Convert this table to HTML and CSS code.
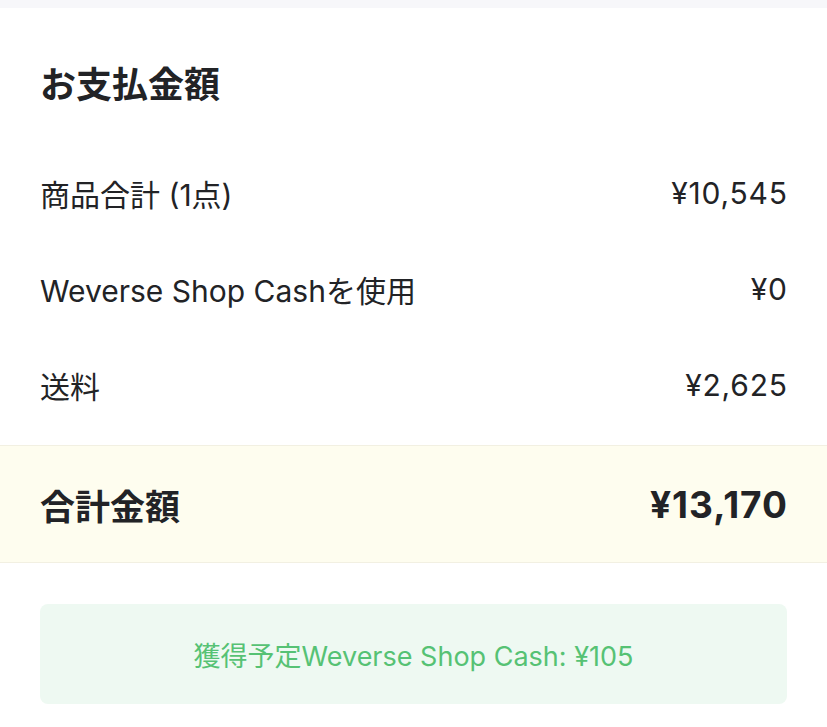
FILE: index.html
```html
<!DOCTYPE html>
<html lang="ja">
<head>
<meta charset="utf-8">
<link rel="stylesheet" href="styles.css">
</head>
<body>
<div class="strip"></div>
<section class="summary">
  <h2 class="title">お支払金額</h2>
  <div class="row"><span>商品合計 (1点)</span><span class="value">¥10,545</span></div>
  <div class="row"><span>Weverse Shop Cashを使用</span><span class="value">¥0</span></div>
  <div class="row"><span>送料</span><span class="value">¥2,625</span></div>
</section>
<div class="total"><span>合計金額</span><span class="total-value">¥13,170</span></div>
<div class="cash-wrap">
  <div class="cash">獲得予定Weverse Shop Cash: ¥105</div>
</div>
</body>
</html>
```

FILE: styles.css
```css
html, body {
  margin: 0;
  padding: 0;
  background: #ffffff;
  font-family: Inter, "Noto Sans CJK JP", sans-serif;
  color: #222326;
}
.strip {
  height: 8px;
  background: #f7f7fa;
}
.summary {
  padding: 48px 40px 12px 40px;
}
.title {
  margin: 0 0 31px 0;
  font-size: 36px;
  line-height: 58px;
  font-weight: 700;
}
.row {
  height: 96px;
  display: flex;
  align-items: center;
  justify-content: space-between;
  font-size: 30px;
  font-weight: 400;
}
.value {
  letter-spacing: 0.8px;
  margin-right: -0.8px;
}
.total {
  height: 116px;
  border-top: 1px solid #f2f0e2;
  border-bottom: 1px solid #f2f0e2;
  background: #fefdef;
  display: flex;
  align-items: center;
  justify-content: space-between;
  padding: 0 40px;
  font-size: 35px;
  font-weight: 700;
}
.total-value {
  font-size: 37px;
  letter-spacing: 1px;
  margin-right: -1px;
}
.cash-wrap {
  padding: 41px 40px 0 40px;
}
.cash {
  height: 100px;
  border-radius: 8px;
  background: #eef9f2;
  color: #56c274;
  display: flex;
  align-items: center;
  justify-content: center;
  font-size: 27px;
}
```
